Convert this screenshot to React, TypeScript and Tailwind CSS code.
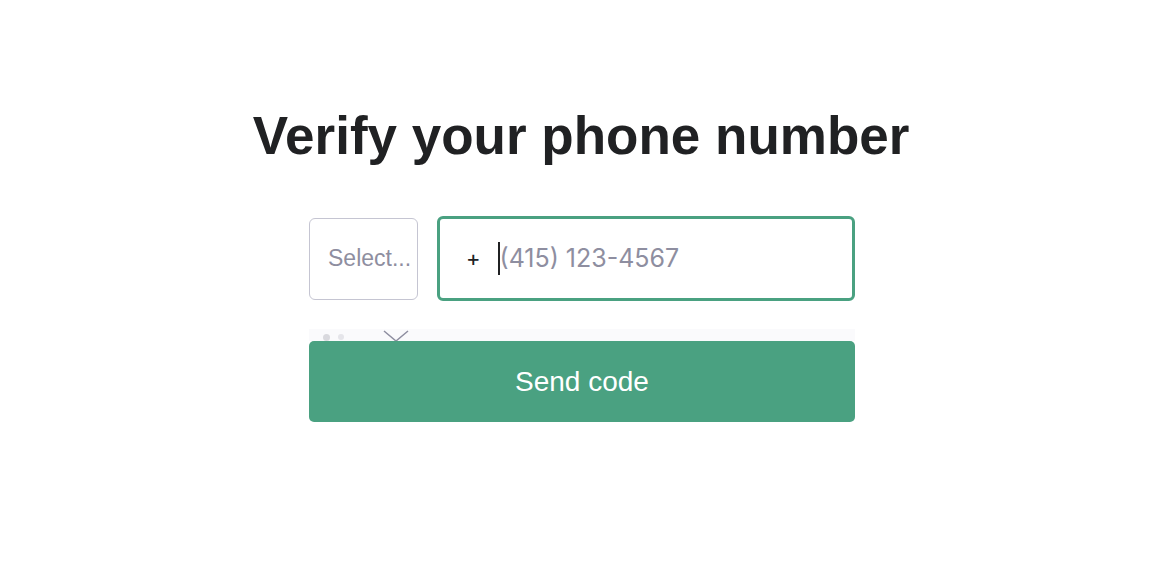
import React from "react";

export default function App() {
  return (
    <div className="min-h-[574px] w-full bg-white flex flex-col items-center pl-[4px] pt-[104px]">
      <h1
        className="text-[53px] leading-[64px] font-bold text-[#202123] whitespace-nowrap"
        style={{ fontFamily: '"Liberation Sans", Arial, sans-serif' }}
      >
        Verify your phone number
      </h1>
      <div className="w-[546px] mt-[48px] ml-[2px] flex flex-col">
        <div className="flex items-center gap-[19px]">
          <div
            className="w-[109px] h-[82px] rounded-[6px] border border-[#c5c5d2] flex items-center pl-[18px] text-[23px] text-[#8e8ea0] whitespace-nowrap overflow-hidden"
            style={{ fontFamily: '"Liberation Sans", Arial, sans-serif' }}
          >
            Select...
          </div>
          <div
            className="flex-1 h-[85px] rounded-[6px] border-[3px] border-[#4aa181] flex items-center pl-[26px]"
            style={{ fontFamily: "Inter, sans-serif" }}
          >
            <span className="text-[22px] text-[#202123]">+</span>
            <span className="ml-[17px] w-[2px] h-[33px] bg-[#202123]" />
            <span className="text-[25px] text-[#8e8ea0]">(415) 123-4567</span>
          </div>
        </div>
        <div className="mt-[28px] h-[12px] bg-[#fafafc] relative overflow-hidden">
          <span className="absolute left-[14px] top-[5px] w-[7px] h-[7px] rounded-full bg-[#d9d9de]" />
          <span className="absolute left-[29px] top-[5px] w-[6px] h-[6px] rounded-full bg-[#e5e5ea]" />
          <svg className="absolute left-[74px] top-[1px]" width="26" height="14" viewBox="0 0 26 14">
            <path d="M1 1 L13 11 L25 1" fill="none" stroke="#8e8ea0" strokeWidth="1.5" />
          </svg>
        </div>
        <button
          className="h-[81px] w-full rounded-[5px] bg-[#4aa181] text-white text-[28px]"
          style={{ fontFamily: '"Liberation Sans", Arial, sans-serif' }}
        >
          Send code
        </button>
      </div>
    </div>
  );
}
